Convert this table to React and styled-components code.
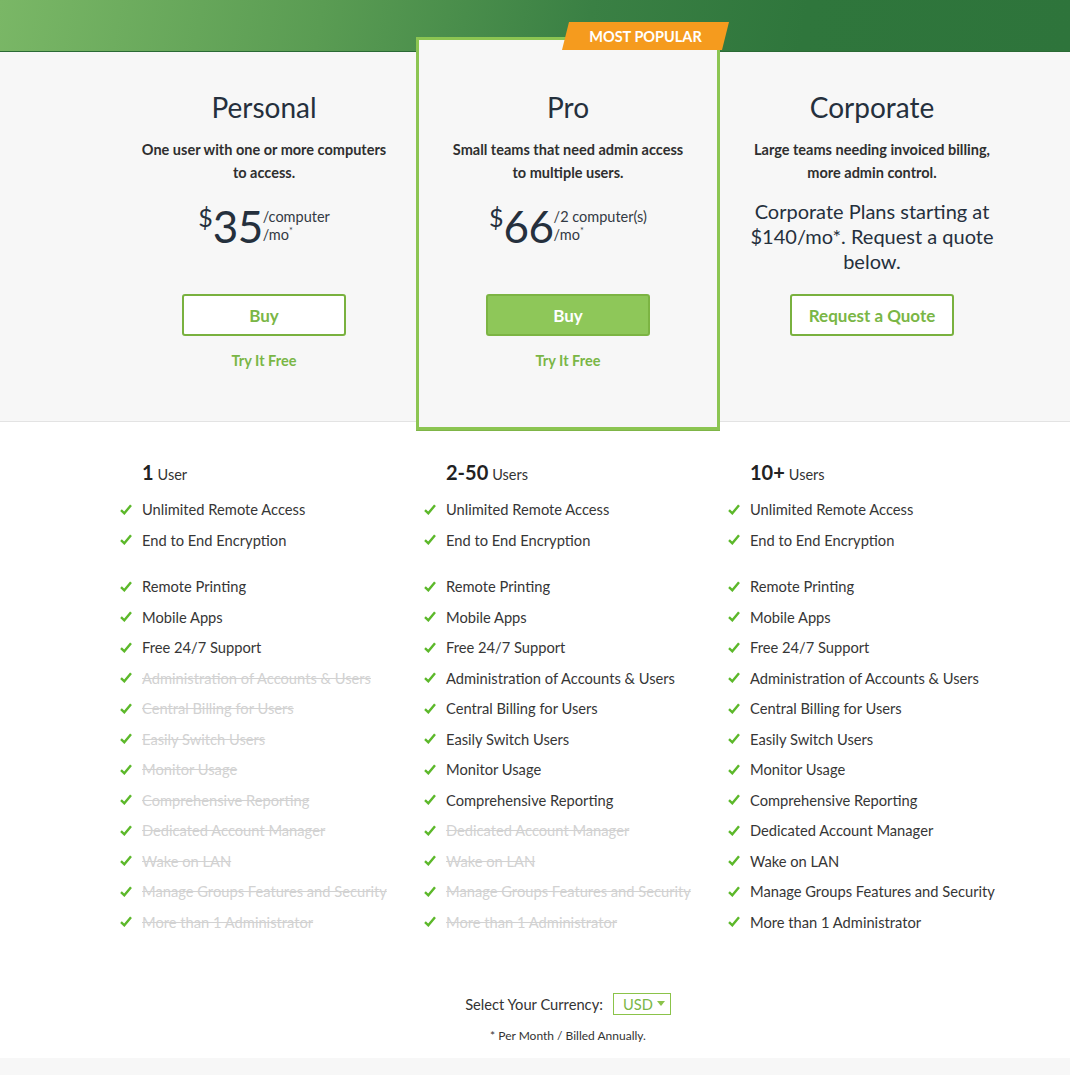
import styled, { createGlobalStyle } from 'styled-components';

const GlobalStyle = createGlobalStyle`
  body {
    margin: 0;
    background: #ffffff;
    font-family: Lato, "Open Sans", "Liberation Sans", sans-serif;
    color: #333333;
  }
`;

const plans = [
  {
    name: 'Personal',
    desc: ['One user with one or more computers', 'to access.'],
    amount: '35',
    unit: '/computer',
    button: 'Buy',
    trial: true,
    users: '1',
    usersLabel: 'User',
    disabledFrom: 5,
  },
  {
    name: 'Pro',
    desc: ['Small teams that need admin access', 'to multiple users.'],
    amount: '66',
    unit: '/2 computer(s)',
    button: 'Buy',
    trial: true,
    featured: true,
    users: '2-50',
    usersLabel: 'Users',
    disabledFrom: 10,
  },
  {
    name: 'Corporate',
    desc: ['Large teams needing invoiced billing,', 'more admin control.'],
    quote: 'Corporate Plans starting at $140/mo*. Request a quote below.',
    button: 'Request a Quote',
    users: '10+',
    usersLabel: 'Users',
    disabledFrom: 99,
  },
];

const features = [
  'Unlimited Remote Access',
  'End to End Encryption',
  'Remote Printing',
  'Mobile Apps',
  'Free 24/7 Support',
  'Administration of Accounts & Users',
  'Central Billing for Users',
  'Easily Switch Users',
  'Monitor Usage',
  'Comprehensive Reporting',
  'Dedicated Account Manager',
  'Wake on LAN',
  'Manage Groups Features and Security',
  'More than 1 Administrator',
];

const Header = styled.div`
  height: 52px;
  background: linear-gradient(100deg, #7ab766 0%, #5a9c53 30%, #3a8044 55%, #2f763c 75%, #2e743b 100%);
  border-bottom: 1px solid #2a6a35;
  box-sizing: border-box;
`;

const PlansBand = styled.section`
  background: #f7f7f7;
  border-bottom: 1px solid #e3e3e3;
`;

const Grid = styled.div`
  display: grid;
  grid-template-columns: repeat(3, 304px);
  padding-left: 112px;
  align-items: start;
`;

const Plan = styled.div`
  position: relative;
  display: flex;
  flex-direction: column;
  align-items: center;
  text-align: center;
  padding: ${(p) => (p.$featured ? '49px 0 56px' : '37px 0 50px')};
  margin: ${(p) => (p.$featured ? '-15px 0 -9px' : '0')};
  border: ${(p) => (p.$featured ? '3px solid #8cc552' : 'none')};
  background: #f7f7f7;
  box-shadow: ${(p) => (p.$featured ? '0 1px 0 #7fb548' : 'none')};
`;

const Badge = styled.div`
  position: absolute;
  top: -18px;
  left: 143px;
  width: 167px;
  height: 28px;
  background: #f59b1e;
  clip-path: polygon(7px 0, 100% 0, calc(100% - 7px) 100%, 0 100%);
  color: #ffffff;
  font-weight: 700;
  font-size: 14.5px;
  line-height: 29px;
  text-align: center;
`;

const PlanName = styled.h2`
  margin: 0;
  font-weight: 400;
  font-size: 28px;
  line-height: 36px;
  color: #25303d;
`;

const Desc = styled.p`
  margin: 13px 0 0;
  font-weight: 700;
  font-size: 14.5px;
  line-height: 23px;
  color: #2f2f2f;
`;

const PriceArea = styled.div`
  height: 110px;
  padding-top: ${(p) => (p.$quote ? '15px' : '20px')};
  box-sizing: border-box;
`;

const Price = styled.div`
  display: flex;
  align-items: flex-start;
  justify-content: center;
  color: #25303d;
`;

const Dollar = styled.span`
  font-size: 25px;
  line-height: 26px;
`;

const Amount = styled.span`
  font-size: 44px;
  line-height: 44px;
  letter-spacing: -0.5px;
`;

const Unit = styled.span`
  display: flex;
  flex-direction: column;
  align-items: flex-start;
  margin-top: 4px;
  font-size: 14.5px;
  line-height: 18px;
  text-align: left;
  color: #333a44;
  sup {
    font-size: 9px;
    line-height: 0;
  }
`;

const Quote = styled.p`
  margin: 0;
  width: 250px;
  font-size: 20px;
  line-height: 25px;
  color: #25303d;
`;

const Button = styled.button`
  width: 164px;
  height: 42px;
  border-radius: 3px;
  border: 2px solid ${(p) => (p.$filled ? '#7cb443' : '#79b13f')};
  background: ${(p) => (p.$filled ? '#8ec759' : '#ffffff')};
  color: ${(p) => (p.$filled ? '#ffffff' : '#7ab646')};
  font-family: inherit;
  font-weight: 700;
  font-size: 17px;
  cursor: pointer;
`;

const TryLink = styled.a`
  margin-top: 15px;
  font-weight: 700;
  font-size: 14.5px;
  line-height: 20px;
  color: #7ab646;
  text-decoration: none;
`;

const FeatureCol = styled.div`
  padding: 36px 0 0 8px;
`;

const UsersHead = styled.div`
  padding-left: 22px;
  margin-bottom: 5px;
  font-size: 14.5px;
  line-height: 28px;
  color: #333;
  b {
    font-size: 20px;
    color: #222;
    margin-right: 4px;
  }
`;

const FeatureRow = styled.div`
  display: flex;
  align-items: center;
  height: 30.5px;
  font-size: 14.7px;
  color: ${(p) => (p.$off ? '#d2d2d2' : '#363636')};
  text-decoration: ${(p) => (p.$off ? 'line-through' : 'none')};
`;

const Spacer = styled.div`
  height: 16px;
`;

const CheckBox = styled.span`
  width: 22px;
  display: inline-flex;
  flex-shrink: 0;
`;

const Footer = styled.div`
  display: flex;
  flex-direction: column;
  align-items: center;
  padding: 56px 0 15px 66px;
`;

const CurrencyRow = styled.div`
  display: flex;
  align-items: center;
  gap: 10px;
  font-size: 14.7px;
  color: #333;
`;

const Select = styled.div`
  display: flex;
  align-items: center;
  gap: 4px;
  height: 20px;
  padding: 0 5px 0 9px;
  border: 1px solid #8bc34a;
  color: #7ab646;
  font-size: 14.7px;
  &::after {
    content: '';
    border-left: 4px solid transparent;
    border-right: 4px solid transparent;
    border-top: 5px solid #8bc34a;
    margin-bottom: 2px;
  }
`;

const Note = styled.p`
  margin: 13px 0 0;
  font-size: 12px;
  color: #333;
`;

const BottomBand = styled.div`
  height: 18px;
  background: #f7f7f7;
`;

const Check = () => (
  <svg width="12" height="11" viewBox="0 0 12 11">
    <path d="M1 6.2 L4.3 9.3 L11 1.2" fill="none" stroke="#5cb82a" strokeWidth="2.4" />
  </svg>
);

const App = () => (
  <>
    <GlobalStyle />
    <Header />
    <PlansBand>
      <Grid>
        {plans.map((p) => (
          <Plan key={p.name} $featured={p.featured}>
            {p.featured && <Badge>MOST POPULAR</Badge>}
            <PlanName>{p.name}</PlanName>
            <Desc>
              {p.desc[0]}
              <br />
              {p.desc[1]}
            </Desc>
            <PriceArea $quote={!!p.quote}>
              {p.quote ? (
                <Quote>{p.quote}</Quote>
              ) : (
                <Price>
                  <Dollar>$</Dollar>
                  <Amount>{p.amount}</Amount>
                  <Unit>
                    <span>{p.unit}</span>
                    <span>
                      /mo<sup>*</sup>
                    </span>
                  </Unit>
                </Price>
              )}
            </PriceArea>
            <Button $filled={p.featured}>{p.button}</Button>
            {p.trial && <TryLink href="#">Try It Free</TryLink>}
          </Plan>
        ))}
      </Grid>
    </PlansBand>
    <Grid>
      {plans.map((p) => (
        <FeatureCol key={p.name}>
          <UsersHead>
            <b>{p.users}</b>
            {p.usersLabel}
          </UsersHead>
          {features.map((f, i) => (
            <div key={f}>
              {i === 2 && <Spacer />}
              <FeatureRow $off={i >= p.disabledFrom}>
                <CheckBox>
                  <Check />
                </CheckBox>
                {f}
              </FeatureRow>
            </div>
          ))}
        </FeatureCol>
      ))}
    </Grid>
    <Footer>
      <CurrencyRow>
        Select Your Currency:
        <Select>USD</Select>
      </CurrencyRow>
      <Note>* Per Month / Billed Annually.</Note>
    </Footer>
    <BottomBand />
  </>
);

export default App;
